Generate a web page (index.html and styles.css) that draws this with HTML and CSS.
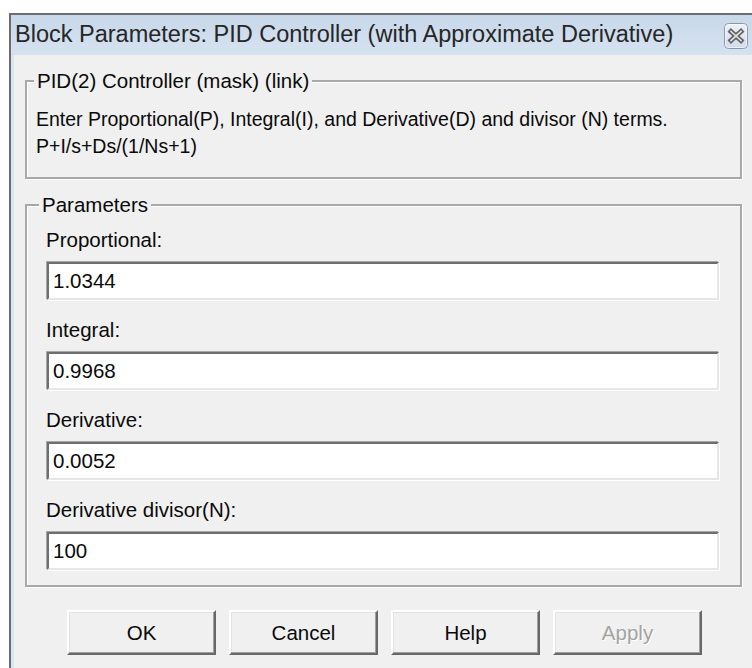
FILE: index.html
```html
<!DOCTYPE html>
<html lang="en">
<head>
<meta charset="utf-8">
<title>Block Parameters: PID Controller (with Approximate Derivative)</title>
<link rel="stylesheet" href="styles.css">
</head>
<body>
<div class="window">
  <div class="titlebar">
    <span class="title">Block Parameters: PID Controller (with Approximate Derivative)</span>
    <button class="close" type="button" aria-label="Close">
      <svg width="24" height="26" viewBox="0 0 24 26" aria-hidden="true">
        <defs>
          <linearGradient id="closeFill" x1="0" y1="0" x2="0" y2="1">
            <stop offset="0" stop-color="#eef2f8"/>
            <stop offset="1" stop-color="#d3dceb"/>
          </linearGradient>
        </defs>
        <rect x="0.5" y="0.5" width="23" height="25" rx="4" fill="url(#closeFill)" stroke="#8a98ae"/>
        <rect x="1.5" y="1.5" width="21" height="23" rx="3" fill="none" stroke="#f7f9fc" stroke-opacity="0.7"/>
        <path d="M7 8.5 L17 17.5 M17 8.5 L7 17.5" stroke="#646464" stroke-width="5" stroke-linecap="square"/>
        <path d="M7 8.5 L17 17.5 M17 8.5 L7 17.5" stroke="#e4e4e4" stroke-width="1.6" stroke-linecap="square"/>
      </svg>
    </button>
  </div>

  <div class="client">
    <fieldset class="group group-info">
      <legend>PID(2) Controller (mask) (link)</legend>
      <p class="desc">Enter Proportional(P), Integral(I), and Derivative(D) and divisor (N) terms.<br>P+I/s+Ds/(1/Ns+1)</p>
    </fieldset>

    <fieldset class="group group-params">
      <legend>Parameters</legend>
      <div class="params">
        <label class="param">
          <span class="param-name">Proportional:</span>
          <input class="field" type="text" value="1.0344">
        </label>
        <label class="param">
          <span class="param-name">Integral:</span>
          <input class="field" type="text" value="0.9968">
        </label>
        <label class="param">
          <span class="param-name">Derivative:</span>
          <input class="field" type="text" value="0.0052">
        </label>
        <label class="param">
          <span class="param-name">Derivative divisor(N):</span>
          <input class="field" type="text" value="100">
        </label>
      </div>
    </fieldset>

    <div class="actions">
      <button class="btn" type="button">OK</button>
      <button class="btn" type="button">Cancel</button>
      <button class="btn" type="button">Help</button>
      <button class="btn" type="button" disabled>Apply</button>
    </div>
  </div>
</div>
</body>
</html>
```

FILE: styles.css
```css
html, body {
  margin: 0;
  padding: 0;
}

body {
  background: #ffffff;
  overflow: hidden;
  font-family: "Liberation Sans", Arial, sans-serif;
}

/* dialog frame: dark outline with a thin light-blue inner edge */
.window {
  box-sizing: border-box;
  margin: 13px 0 0 9px;
  height: 655px;
  border-top: 2px solid #6d6d6d;
  border-left: 2px solid #6d6d6d;
  background: #d9e5f2;
  display: flex;
  flex-direction: column;
}

.titlebar {
  flex: none;
  height: 40px;
  display: flex;
  align-items: center;
  justify-content: space-between;
  padding: 0 4px;
  background: linear-gradient(to bottom, #c8d8ea, #d6e2f0);
}

.title {
  font-size: 23.5px;
  line-height: 1;
  color: #262626;
  white-space: nowrap;
}

.close {
  display: block;
  width: 24px;
  height: 26px;
  margin: 2px 0 0 0;
  padding: 0;
  border: 0;
  background: none;
}

.close svg {
  display: block;
}

/* dialog body */
.client {
  flex: 1;
  margin-left: 3px;
  padding-top: 12px;
  background: #f0f0f0;
  color: #0a0a0a;
  font-size: 20.5px;
  line-height: 27px;
}

/* etched group boxes */
.group {
  margin: 0 10px 0 11px;
  min-inline-size: 0;
  border: 2px solid #a8a8a8;
  box-shadow: inset 1px 1px 0 #ffffff, 1px 1px 0 #ffffff;
}

.group legend {
  padding: 0 3px;
  background: #f0f0f0;
  line-height: 27px;
  white-space: nowrap;
}

.group-info {
  padding: 12px 8px 17px 9px;
}

.group-info legend {
  margin-left: -2px;
}

.desc {
  margin: 0;
  font-size: 19.5px;
  white-space: nowrap;
}

.group-params {
  margin-top: 12px;
  padding: 8px 21px 15px 19px;
}

.group-params legend {
  margin-left: -7px;
}

.params {
  display: flex;
  flex-direction: column;
  gap: 16px;
}

.param {
  display: flex;
  flex-direction: column;
  gap: 9px;
}

.param-name {
  display: block;
  line-height: 27px;
  white-space: nowrap;
}

/* sunken edit fields */
.field {
  display: block;
  box-sizing: border-box;
  width: 672px;
  height: 38px;
  margin: 0 0 0 1px;
  padding: 0 4px;
  border: 2px solid;
  border-color: #6e6e6e #e6e6e6 #e6e6e6 #6e6e6e;
  box-shadow: -1px -1px 0 #a6a6a6, 1px 1px 0 #ffffff;
  background: #ffffff;
  color: #0a0a0a;
  font: inherit;
  font-size: 20.5px;
  line-height: 27px;
  outline: none;
}

/* raised push buttons */
.actions {
  display: flex;
  gap: 13px;
  margin-top: 23px;
  padding-left: 53px;
}

.btn {
  box-sizing: border-box;
  width: 149px;
  height: 45px;
  padding: 0;
  border: 2px solid;
  border-color: #ffffff #686868 #686868 #ffffff;
  box-shadow: inset -1px -1px 0 #a0a0a0, inset 1px 1px 0 #e3e3e3;
  background: #f0f0f0;
  color: #0a0a0a;
  font: inherit;
  font-size: 20.5px;
  line-height: 27px;
}

.btn:disabled {
  color: #a3a3a3;
  text-shadow: 1px 1px 0 #ffffff;
}
```
